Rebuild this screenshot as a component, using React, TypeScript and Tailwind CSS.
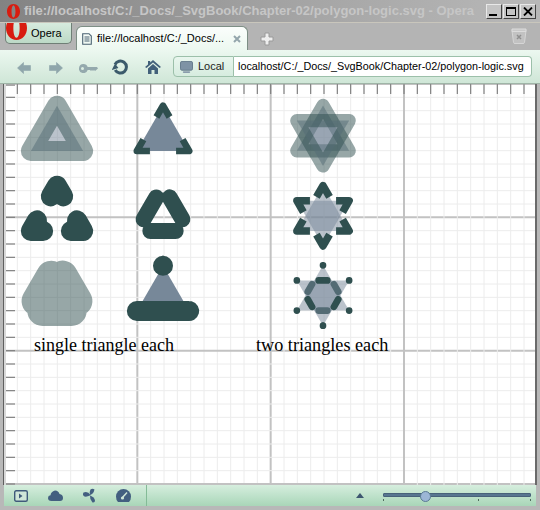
import React from "react";

const DARK = "#2f4f4f";
const SLATE = "#778899";
const S = 52.3;
const H = 45.3;

// triangle whose apex is at (cx, ay), pointing up
const up = (cx: number, ay: number) =>
  `M${cx} ${ay}L${cx + S / 2} ${ay + H}L${cx - S / 2} ${ay + H}Z`;
// triangle around a centre, pointing up or down
const star = (cx: number, cy: number, dir: 1 | -1) => {
  const R = 30.2;
  const a = cy - dir * R;
  const b = cy + (dir * R) / 2;
  return `M${cx} ${a}L${cx + S / 2} ${b}L${cx - S / 2} ${b}Z`;
};

const steps = Array.from({ length: 41 }, (_, i) => i);

function Canvas() {
  return (
    <svg width="531" height="401" viewBox="4 84 531 401" className="block bg-white">
      {steps.map((i) => {
        const x = 4 + (i * 40) / 3;
        const y = 84 + (i * 40) / 3;
        const major = i % 10 === 0;
        return (
          <g key={i}>
            <line x1={x} y1={84} x2={x} y2={485} stroke={major ? "#c2c2c2" : "#ececec"} strokeWidth={major ? 2 : 1} />
            <line x1={4} y1={y} x2={536} y2={y} stroke={major ? "#c2c2c2" : "#ececec"} strokeWidth={major ? 2 : 1} />
          </g>
        );
      })}
      {steps.map((i) => {
        const x = 4 + (i * 40) / 3;
        const y = 84 + (i * 40) / 3;
        return (
          <g key={i} stroke="#808080" strokeWidth="1.2">
            <line x1={x} y1={84} x2={x} y2={94} />
            <line x1={4} y1={y} x2={15} y2={y} />
          </g>
        );
      })}
      <rect x="4" y="84" width="11" height="2" fill="#a8a8a8" />
      <rect x="4" y="84" width="2" height="401" fill="#d8d8d8" />

      {/* left column */}
      <path d={up(57, 105.7)} fill={SLATE} fillOpacity=".5" stroke={DARK} strokeOpacity=".5" strokeWidth="20" strokeLinejoin="round" />
      <path d={up(57, 185.7)} fill="none" stroke={DARK} strokeWidth="20" strokeLinejoin="round" strokeLinecap="round" strokeDasharray="24.6 27.7" strokeDashoffset="12.3" />
      <path d={up(57, 265.7)} fill="none" stroke={DARK} strokeOpacity=".5" strokeWidth="30" strokeLinejoin="round" strokeLinecap="round" strokeDasharray="29.3 23" strokeDashoffset="40.8" />
      <text x="34" y="351" fontSize="18" fill="#000" className="font-['Liberation_Serif',serif]">single triangle each</text>

      {/* second column */}
      <path d={up(163, 105.7)} fill={SLATE} stroke={DARK} strokeWidth="6.67" strokeLinejoin="round" strokeDasharray="26.15 26.15" strokeDashoffset="13.07" />
      <path d={up(163, 185.7)} fill="none" stroke={DARK} strokeWidth="16" strokeLinejoin="round" strokeLinecap="round" strokeDasharray="25.3 27" strokeDashoffset="38.8" />
      <path d={up(163, 265.7)} fill={SLATE} stroke={DARK} strokeWidth="20" strokeLinejoin="round" strokeLinecap="round" strokeDasharray={`0 ${S} ${S} ${S}`} />

      {/* right column */}
      {([1, -1] as const).map((d) => (
        <path key={d} d={star(323, 135.7, d)} fill={SLATE} fillOpacity=".5" stroke={DARK} strokeOpacity=".5" strokeWidth="13.33" strokeLinejoin="round" />
      ))}
      {([1, -1] as const).map((d) => (
        <path key={d} d={star(323, 215.8, d)} fill={SLATE} fillOpacity=".5" stroke={DARK} strokeWidth="7.5" strokeLinejoin="round" strokeDasharray="26.15 26.15" strokeDashoffset="13.07" />
      ))}
      {([1, -1] as const).map((d) => (
        <path key={d} d={star(323, 295.5, d)} fill={SLATE} fillOpacity=".5" stroke={DARK} strokeWidth="6.67" strokeLinejoin="round" strokeLinecap="round" strokeDasharray="0 21.8 8.7 21.8" />
      ))}
      <text x="256" y="351" fontSize="18.2" fill="#000" className="font-['Liberation_Serif',serif]">two triangles each</text>
    </svg>
  );
}

function OperaO({ className }: { className: string }) {
  return (
    <svg viewBox="0 0 14 16" className={className}>
      <path fillRule="evenodd" fill="#d81c10" d="M7 0C3 0 0 3.4 0 8s3 8 7 8 7-3.4 7-8-3-8-7-8zm0 1.5C8.3 1.5 9.1 4.4 9.1 8S8.3 14.5 7 14.5 4.9 11.6 4.9 8 5.7 1.5 7 1.5z" />
    </svg>
  );
}

function WinButton({ children }: { children: React.ReactNode }) {
  return (
    <div className="w-[16px] h-[15px] flex items-center justify-center bg-[#c4c4c4] border border-t-[#e8e8e8] border-l-[#e8e8e8] border-r-[#444444] border-b-[#444444]">
      {children}
    </div>
  );
}

export default function App() {
  return (
    <div className="w-[540px] h-[510px] overflow-hidden flex flex-col bg-[#b4b4b4] font-['Liberation_Sans',sans-serif]">
      {/* title bar */}
      <div className="h-[23px] shrink-0 flex items-center pl-[7px] pr-[4px] bg-gradient-to-r from-[#838383] via-[#a2a2a2] to-[#b8b8b8] border-b border-[#c9c6bc]">
        <OperaO className="w-[13px] h-[15px] shrink-0" />
        <span className="ml-[4px] text-[13px] font-bold text-[#c6c6c6] whitespace-nowrap">
          file://localhost/C:/_Docs/_SvgBook/Chapter-02/polygon-logic.svg - Opera
        </span>
        <div className="ml-auto flex gap-[1px]">
          <WinButton><div className="w-[8px] h-[2px] bg-black mt-[8px] mr-[2px]" /></WinButton>
          <WinButton><div className="w-[10px] h-[9px] border border-t-2 border-black" /></WinButton>
          <WinButton>
            <svg viewBox="0 0 10 9" className="w-[10px] h-[9px]"><path d="M1 0.5L9 8.5M9 0.5L1 8.5" stroke="#000" strokeWidth="1.8" /></svg>
          </WinButton>
        </div>
      </div>

      {/* tab bar */}
      <div className="h-[27px] shrink-0 flex items-start pl-[5px] pr-[13px]">
        <div className="relative w-[67px] h-[21px] rounded-b-[5px] border border-t-0 border-[#6f7f76] bg-gradient-to-b from-[#d6ebde] to-[#bcd9c6] flex items-center overflow-hidden">
          <OperaO className="absolute left-0 top-[-7px] w-[21px] h-[24px]" />
          <span className="ml-[25px] text-[11px] text-black">Opera</span>
        </div>
        <div className="ml-[4px] mt-[3px] w-[172px] h-[24px] rounded-t-[6px] border border-b-0 border-[#7d8f85] bg-gradient-to-b from-[#fbfefc] to-[#ecf8f0] flex items-center px-[5px]">
          <svg viewBox="0 0 10 12" className="w-[10px] h-[12px] shrink-0">
            <path d="M0.7 0.7H7L9.3 3V11.3H0.7ZM2.5 4H7.5M2.5 6H7.5M2.5 8H7.5" fill="none" stroke="#4a6272" strokeWidth="1.1" />
          </svg>
          <span className="ml-[5px] text-[11px] text-black whitespace-nowrap">file://localhost/C:/_Docs/...</span>
          <svg viewBox="0 0 8 8" className="ml-auto w-[8px] h-[8px] shrink-0 mr-[1px]">
            <path d="M1 1L7 7M7 1L1 7" stroke="#94a6ac" strokeWidth="2" />
          </svg>
        </div>
        <svg viewBox="0 0 14 14" className="ml-[12px] mt-[9px] w-[14px] h-[14px] shrink-0">
          <path d="M5 1H9V5H13V9H9V13H5V9H1V5H5Z" fill="#eeeeee" stroke="#9a9a9a" strokeWidth="1" strokeLinejoin="round" />
        </svg>
        <svg viewBox="0 0 16 16" className="ml-auto mt-[5px] w-[16px] h-[16px] shrink-0">
          <path d="M1 2.5H15L13.5 14.5Q13.3 15.5 12 15.5H4Q2.7 15.5 2.5 14.5Z" fill="#c2c2c2" stroke="#d6d6d6" />
          <path d="M1 1H15V3.5H1Z" fill="#c9c9c9" stroke="#dcdcdc" />
          <path d="M6 7L10 11M10 7L6 11" stroke="#8f8f8f" strokeWidth="1.5" />
        </svg>
      </div>

      {/* toolbar */}
      <div className="h-[34px] shrink-0 flex items-center pl-[17px] pr-[8px] bg-gradient-to-b from-[#ecf8f0] to-[#cfe6d7] border-b border-[#9fb5a7]">
        <svg viewBox="0 0 14 12" className="w-[14px] h-[12px] shrink-0 mt-[3px]">
          <path d="M0.5 6L6.5 0.5V3.5H13.5V8.5H6.5V11.5Z" fill="#8fa6ab" stroke="#8fa6ab" strokeLinejoin="round" strokeWidth=".6" />
        </svg>
        <svg viewBox="0 0 14 12" className="ml-[18px] w-[14px] h-[12px] shrink-0 mt-[3px]">
          <path d="M13.5 6L7.5 0.5V3.5H0.5V8.5H7.5V11.5Z" fill="#8fa6ab" stroke="#8fa6ab" strokeLinejoin="round" strokeWidth=".6" />
        </svg>
        <svg viewBox="0 0 19 9" className="ml-[16px] w-[19px] h-[9px] shrink-0 mt-[3px]">
          <path fillRule="evenodd" d="M4.5 0A4.5 4.5 0 1 0 8.7 6H11L12 7L13 6L14 7L15 6L16 7L19 4.5L18 3H8.7A4.5 4.5 0 0 0 4.5 0ZM3.5 3A1.5 1.5 0 1 1 3.5 6A1.5 1.5 0 1 1 3.5 3Z" fill="#94a9ad" />
        </svg>
        <svg viewBox="0 0 16 16" className="ml-[14px] w-[16px] h-[16px] shrink-0 mt-[1px]">
          <path d="M3.2 11A6 6 0 1 0 3 5.5" fill="none" stroke="#3b5a6b" strokeWidth="3" />
          <path d="M0 5.5L7 4.5L2.5 10.5Z" fill="#3b5a6b" transform="rotate(170 3 7) translate(0 -1)" />
        </svg>
        <svg viewBox="0 0 16 14" className="ml-[17px] w-[16px] h-[14px] shrink-0">
          <path d="M8 0L16 7L14.5 8L8 2.5L1.5 8L0 7L3 4.4V1H5.2V2.5Z M3 8.5L8 4L13 8.5V14H9.5V10H6.5V14H3Z" fill="#42607a" />
        </svg>
        <div className="ml-[12px] h-[21px] w-[61px] shrink-0 flex items-center rounded-l-[4px] border border-[#9cc0aa] bg-gradient-to-b from-[#e9f6ee] to-[#d6ecdf] pl-[6px]">
          <svg viewBox="0 0 14 13" className="w-[13px] h-[12px] shrink-0">
            <rect x="0.5" y="0.5" width="13" height="9.5" rx="1.5" fill="#7e93a5" stroke="#62788a" />
            <rect x="3" y="11" width="8" height="2" rx="1" fill="#8a9cac" />
          </svg>
          <span className="ml-[5px] text-[11px] text-[#222222]">Local</span>
        </div>
        <div className="h-[21px] flex-1 flex items-center rounded-r-[4px] border border-l-0 border-[#9cc0aa] bg-white pl-[4px] overflow-hidden">
          <span className="text-[10.8px] text-black whitespace-nowrap">localhost/C:/_Docs/_SvgBook/Chapter-02/polygon-logic.svg</span>
        </div>
      </div>

      {/* page */}
      <div className="flex-1 min-h-0 flex pl-[3px] bg-[#b8b8b8]">
        <div className="w-[1px] bg-[#5f5f5f]" />
        <Canvas />
        <div className="w-[2px] bg-[#6a6a6a]" />
      </div>

      {/* status bar */}
      <div className="h-[25px] shrink-0 pl-[4px] pr-[4px] pb-[4px] bg-[#b8b8b8]">
        <div className="h-[21px] flex items-center pl-[10px] bg-gradient-to-b from-[#d6eede] via-[#bfe2cb] to-[#a9d6b8]">
          <svg viewBox="0 0 14 12" className="w-[14px] h-[12px] shrink-0">
            <rect x="0.7" y="0.7" width="12.6" height="10.6" rx="1.5" fill="#cfe6d8" stroke="#3f5a7a" strokeWidth="1.4" />
            <path d="M5 3.5L8.5 6L5 8.5Z" fill="#3f5a7a" />
          </svg>
          <svg viewBox="0 0 15 11" className="ml-[20px] w-[15px] h-[11px] shrink-0">
            <path d="M3.5 11Q0 11 0 8Q0 5.5 2.5 5.3Q3 1.5 7 0.5Q10.5 0.5 11.5 4Q15 4.5 15 8Q15 11 12 11Z" fill="#435f80" />
          </svg>
          <svg viewBox="0 0 15 15" className="ml-[19px] w-[15px] h-[15px] shrink-0">
            <path d="M8.5 7Q6 3 1.5 4.5Q0 7 2.5 8.5Q5 9 8 7.5Z" fill="#435f80" />
            <path d="M8 7Q11.5 6 12.5 1.5Q10.5 0 8.5 1.5Q7 4 8 7Z" fill="#435f80" />
            <path d="M8 7.5Q7.5 11 10.5 14.5Q13 15 13 12.5Q12.5 9 8 7.5Z" fill="#435f80" />
          </svg>
          <svg viewBox="0 0 15 13" className="ml-[19px] w-[15px] h-[13px] shrink-0">
            <path d="M2 13Q0 11 0 7.5A7.5 7.5 0 0 1 15 7.5Q15 11 13 13Z" fill="#435f80" />
            <path d="M6 9L11 3.5" stroke="#cfe6d8" strokeWidth="1.5" />
            <circle cx="6.5" cy="9" r="1.6" fill="#cfe6d8" />
          </svg>
          <div className="ml-[15px] w-[1px] h-[21px] bg-[#84bb97]" />
          <svg viewBox="0 0 8 5" className="ml-[209px] w-[8px] h-[5px] shrink-0">
            <path d="M4 0L8 5H0Z" fill="#3d5670" />
          </svg>
          <div className="relative ml-[19px] w-[148px] h-[21px]">
            <div className="absolute left-0 right-0 top-[8px] h-[4px] rounded-[1px] bg-[#587690] border border-[#48627a]" />
            <div className="absolute left-[37px] top-[6px] w-[11px] h-[11px] rounded-full bg-[#9cb6d6] border border-[#5a7a94]" />
            <div className="absolute left-0 top-[14px] w-[1px] h-[2px] bg-[#4f6a5c]" />
            <div className="absolute left-[95px] top-[14px] w-[1px] h-[2px] bg-[#4f6a5c]" />
            <div className="absolute left-[147px] top-[14px] w-[1px] h-[2px] bg-[#4f6a5c]" />
          </div>
        </div>
      </div>
    </div>
  );
}
